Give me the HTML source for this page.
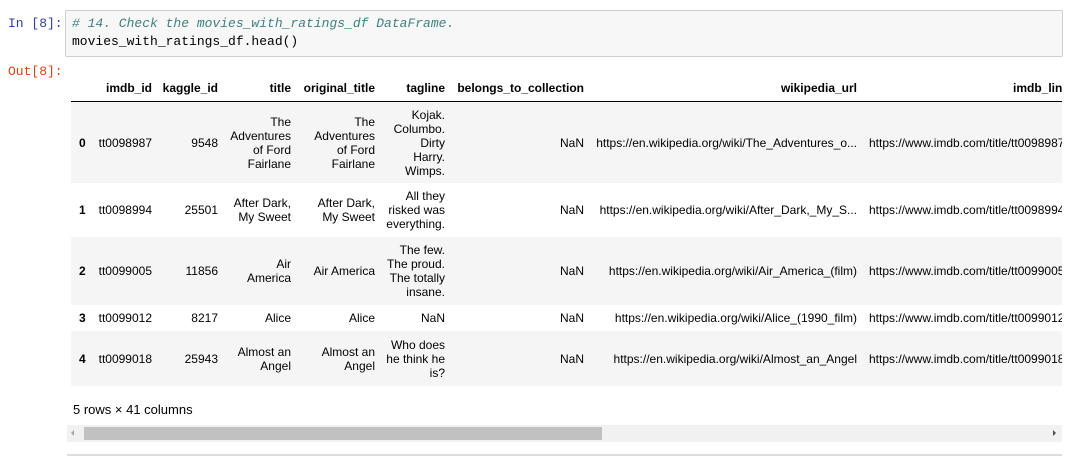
<!DOCTYPE html>
<html><head><style>
body{margin:0;width:1080px;height:456px;background:#fff;position:relative;overflow:hidden;font-family:"Liberation Sans",Arial,sans-serif;font-size:12px;color:#000}
.p{position:absolute}
.mono{font-family:"Liberation Mono",monospace;font-size:13px}
.c{position:absolute;display:flex;align-items:center;justify-content:flex-end;text-align:right;line-height:14px;white-space:nowrap}
.h{font-weight:bold}
.band{position:absolute;left:71px;width:991px}
</style></head><body>
<div class="p mono" style="left:8px;top:16px;color:#303f9f">In [8]:</div>
<div class="p" style="left:65px;top:10px;width:996px;height:45px;background:#f7f7f7;border:1px solid #cfcfcf;border-radius:2px"></div>
<div class="p mono" style="left:72px;top:16px;color:#408080;font-style:italic">#&nbsp;14.&nbsp;Check&nbsp;the&nbsp;movies_with_ratings_df&nbsp;DataFrame.</div>
<div class="p mono" style="left:72px;top:34px">movies_with_ratings_df.head()</div>
<div class="p mono" style="left:8px;top:64px;color:#d84315">Out[8]:</div>

<div class="band" style="top:101px;height:1px;background:#000"></div>
<div class="band" style="top:102px;height:81px;background:#f5f5f5"></div>
<div class="band" style="top:237px;height:68px;background:#f5f5f5"></div>
<div class="band" style="top:331px;height:55px;background:#f5f5f5"></div>

<div style="position:absolute;left:0;top:0;width:1062px;height:456px;overflow:hidden">
<div class="c h" style="top:78px;height:20px;left:60px;width:92px">imdb_id</div>
<div class="c h" style="top:78px;height:20px;left:150px;width:68px">kaggle_id</div>
<div class="c h" style="top:78px;height:20px;left:220px;width:71px">title</div>
<div class="c h" style="top:78px;height:20px;left:290px;width:85px">original_title</div>
<div class="c h" style="top:78px;height:20px;left:380px;width:65px">tagline</div>
<div class="c h" style="top:78px;height:20px;left:440px;width:144px">belongs_to_collection</div>
<div class="c h" style="top:78px;height:20px;left:600px;width:257px">wikipedia_url</div>
<div class="c h" style="top:78px;height:20px;left:869px;width:200px">imdb_link</div>

<div class="c h" style="top:102px;height:81px;left:79px;width:10px;justify-content:flex-start">0</div>
<div class="c" style="top:102px;height:81px;left:60px;width:92px">tt0098987</div>
<div class="c" style="top:102px;height:81px;left:150px;width:68px">9548</div>
<div class="c" style="top:102px;height:81px;left:220px;width:71px">The<br>Adventures<br>of Ford<br>Fairlane</div>
<div class="c" style="top:102px;height:81px;left:300px;width:75px">The<br>Adventures<br>of Ford<br>Fairlane</div>
<div class="c" style="top:102px;height:81px;left:380px;width:65px">Kojak.<br>Columbo.<br>Dirty<br>Harry.<br>Wimps.</div>
<div class="c" style="top:102px;height:81px;left:440px;width:144px">NaN</div>
<div class="c" style="top:102px;height:81px;left:590px;width:267px">https://en.wikipedia.org/wiki/The_Adventures_o...</div>
<div class="c" style="top:102px;height:81px;left:869px;width:240px;justify-content:flex-start">https://www.imdb.com/title/tt0098987/</div>

<div class="c h" style="top:183px;height:54px;left:79px;width:10px;justify-content:flex-start">1</div>
<div class="c" style="top:183px;height:54px;left:60px;width:92px">tt0098994</div>
<div class="c" style="top:183px;height:54px;left:150px;width:68px">25501</div>
<div class="c" style="top:183px;height:54px;left:220px;width:71px">After Dark,<br>My Sweet</div>
<div class="c" style="top:183px;height:54px;left:300px;width:75px">After Dark,<br>My Sweet</div>
<div class="c" style="top:183px;height:54px;left:380px;width:65px">All they<br>risked was<br>everything.</div>
<div class="c" style="top:183px;height:54px;left:440px;width:144px">NaN</div>
<div class="c" style="top:183px;height:54px;left:590px;width:267px">https://en.wikipedia.org/wiki/After_Dark,_My_S...</div>
<div class="c" style="top:183px;height:54px;left:869px;width:240px;justify-content:flex-start">https://www.imdb.com/title/tt0098994/</div>

<div class="c h" style="top:237px;height:68px;left:79px;width:10px;justify-content:flex-start">2</div>
<div class="c" style="top:237px;height:68px;left:60px;width:92px">tt0099005</div>
<div class="c" style="top:237px;height:68px;left:150px;width:68px">11856</div>
<div class="c" style="top:237px;height:68px;left:220px;width:71px">Air<br>America</div>
<div class="c" style="top:237px;height:68px;left:300px;width:75px">Air America</div>
<div class="c" style="top:237px;height:68px;left:380px;width:65px">The few.<br>The proud.<br>The totally<br>insane.</div>
<div class="c" style="top:237px;height:68px;left:440px;width:144px">NaN</div>
<div class="c" style="top:237px;height:68px;left:590px;width:267px">https://en.wikipedia.org/wiki/Air_America_(film)</div>
<div class="c" style="top:237px;height:68px;left:869px;width:240px;justify-content:flex-start">https://www.imdb.com/title/tt0099005/</div>

<div class="c h" style="top:305px;height:26px;left:79px;width:10px;justify-content:flex-start">3</div>
<div class="c" style="top:305px;height:26px;left:60px;width:92px">tt0099012</div>
<div class="c" style="top:305px;height:26px;left:150px;width:68px">8217</div>
<div class="c" style="top:305px;height:26px;left:220px;width:71px">Alice</div>
<div class="c" style="top:305px;height:26px;left:300px;width:75px">Alice</div>
<div class="c" style="top:305px;height:26px;left:380px;width:65px">NaN</div>
<div class="c" style="top:305px;height:26px;left:440px;width:144px">NaN</div>
<div class="c" style="top:305px;height:26px;left:590px;width:267px">https://en.wikipedia.org/wiki/Alice_(1990_film)</div>
<div class="c" style="top:305px;height:26px;left:869px;width:240px;justify-content:flex-start">https://www.imdb.com/title/tt0099012/</div>

<div class="c h" style="top:331px;height:55px;left:79px;width:10px;justify-content:flex-start">4</div>
<div class="c" style="top:331px;height:55px;left:60px;width:92px">tt0099018</div>
<div class="c" style="top:331px;height:55px;left:150px;width:68px">25943</div>
<div class="c" style="top:331px;height:55px;left:220px;width:71px">Almost an<br>Angel</div>
<div class="c" style="top:331px;height:55px;left:300px;width:75px">Almost an<br>Angel</div>
<div class="c" style="top:331px;height:55px;left:380px;width:65px">Who does<br>he think he<br>is?</div>
<div class="c" style="top:331px;height:55px;left:440px;width:144px">NaN</div>
<div class="c" style="top:331px;height:55px;left:590px;width:267px">https://en.wikipedia.org/wiki/Almost_an_Angel</div>
<div class="c" style="top:331px;height:55px;left:869px;width:240px;justify-content:flex-start">https://www.imdb.com/title/tt0099018/</div>
</div>

<div class="p" style="left:73px;top:402px;font-size:13px">5 rows × 41 columns</div>
<div class="p" style="left:67px;top:425px;width:995px;height:17px;background:#f1f1f1"></div>
<div class="p" style="left:84px;top:427px;width:518px;height:13px;background:#c1c1c1"></div>
<div class="p" style="left:71px;top:430px;width:0;height:0;border-top:3px solid transparent;border-bottom:3px solid transparent;border-right:3px solid #a3a3a3"></div>
<div class="p" style="left:1053px;top:430px;width:0;height:0;border-top:3px solid transparent;border-bottom:3px solid transparent;border-left:3px solid #505050"></div>
<div class="p" style="left:67px;top:454px;width:995px;height:2px;background:#ddd"></div>
</body></html>
